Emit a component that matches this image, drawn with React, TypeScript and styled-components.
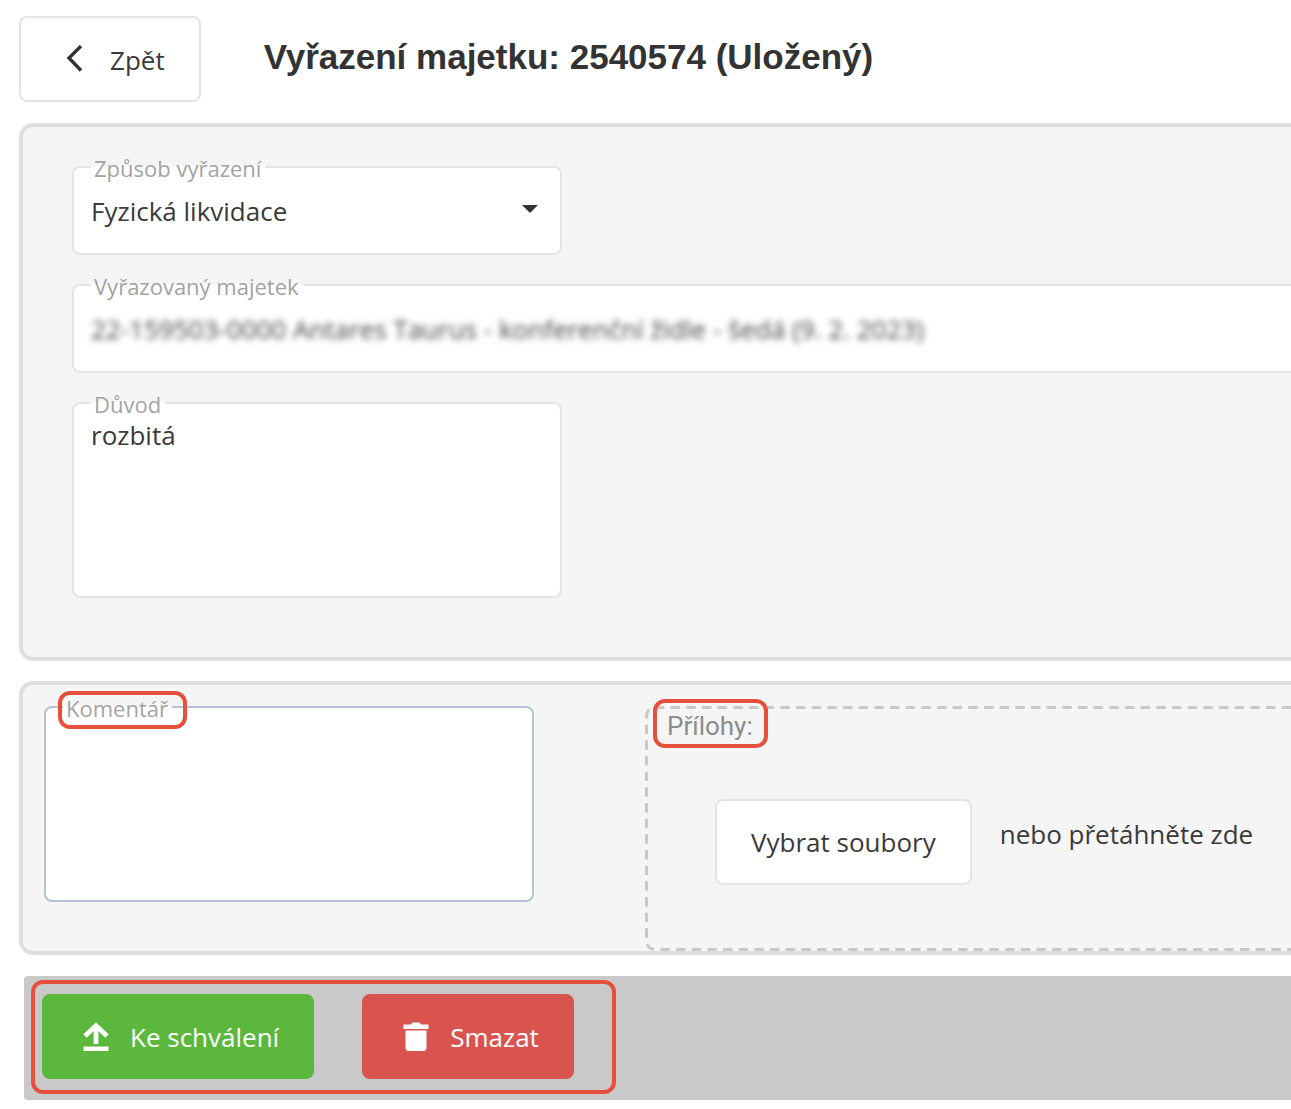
import React from 'react';
import styled, { createGlobalStyle, css } from 'styled-components';

const ui = '"Open Sans", "Noto Sans", sans-serif';

const GlobalStyle = createGlobalStyle`
  *, *::before, *::after { box-sizing: border-box; }
  body { margin: 0; background: #fff; color: #3a3a3a; font-family: ${ui}; font-size: 26px; }
  button, input, select, textarea { font: inherit; color: inherit; }
`;

const Page = styled.main`
  padding: 16px 0 9px 19px;
  overflow: hidden;
`;

const Header = styled.header`
  display: flex;
  align-items: center;
  gap: 63px;
  margin-bottom: 21px;
`;

const Title = styled.h1`
  margin: 0;
  padding-bottom: 4px;
  font: bold 35px/44px "Liberation Sans", Arial, sans-serif;
  color: #333;
`;

const Button = styled.button`
  display: inline-flex;
  align-items: center;
  justify-content: center;
  height: 86px;
  padding: 0 34px;
  border: 2px solid #e4e4e4;
  border-radius: 8px;
  background: #fff;
  white-space: nowrap;
  cursor: pointer;
`;

const BackButton = styled(Button)`
  gap: 26px;
  padding: 2px 34px 0 45px;
`;

const ActionButton = styled(Button)<{ $tone: string }>`
  gap: 20px;
  height: 85px;
  padding: 0 33px 0 38px;
  border-color: ${(p) => p.$tone};
  background: ${(p) => p.$tone};
  color: #fff;
`;

const Panel = styled.section`
  border: 4px solid #dedede;
  border-right: 0;
  border-radius: 14px 0 0 14px;
  background: #f5f5f5;
`;

const DetailPanel = styled(Panel)`
  display: flex;
  flex-direction: column;
  gap: 29px;
  padding: 39px 0 59px 49px;
`;

const CommentPanel = styled(Panel)`
  display: flex;
  align-items: flex-start;
  gap: 111px;
  margin-top: 20px;
  padding: 21px 0 0 21px;
`;

const Field = styled.div<{ $wide?: boolean; $active?: boolean; $tall?: boolean }>`
  position: relative;
  flex: none;
  width: ${(p) => (p.$wide ? 'auto' : '490px')};
  height: ${(p) => (p.$tall ? '196px' : '89px')};
  border: 2px solid ${(p) => (p.$active ? '#b3c3d6' : '#e4e4e4')};
  border-radius: 8px;
  background: #fff;
  ${(p) => p.$wide && css`
    border-right: 0;
    border-radius: 8px 0 0 8px;
  `}
`;

const Label = styled.label`
  position: absolute;
  top: -17px;
  left: 17px;
  padding: 0 4px 0 3px;
  background: linear-gradient(#fff, #fff) 0 15px / 100% 2px no-repeat;
  color: #a3a3a3;
  font-size: 22px;
  line-height: 34px;
  white-space: nowrap;
`;

const control = css`
  display: block;
  width: 100%;
  height: 100%;
  margin: 0;
  border: 0;
  outline: 0;
  background: transparent;
`;

const Select = styled.select`
  ${control}
  padding: 0 50px 0 17px;
  appearance: none;
`;

const Caret = styled.svg`
  position: absolute;
  top: 37px;
  right: 22px;
  pointer-events: none;
`;

const MaskedInput = styled.input`
  ${control}
  padding: 0 17px;
  color: #444;
  filter: blur(3px);
`;

const TextArea = styled.textarea`
  ${control}
  padding: 14px 17px;
  line-height: 34px;
  resize: none;
`;

const DropZone = styled.div`
  position: relative;
  flex: 1;
  height: 245px;
  padding: 1px 0 0 22px;
`;

const DropOutline = styled.svg`
  position: absolute;
  inset: 0;
  width: 100%;
  height: 100%;
  pointer-events: none;

  rect {
    width: 1998px;
    height: calc(100% - 3px);
    fill: none;
    stroke: #c8c8c8;
    stroke-width: 3px;
    stroke-dasharray: 0.6 0.4;
  }
`;

const DropTitle = styled.span`
  position: relative;
  display: inline-block;
  color: #8c8c8c;
  font: 26px/34px Roboto, sans-serif;
`;

const DropRow = styled.div`
  display: flex;
  align-items: flex-start;
  gap: 28px;
  padding: 56px 0 0 48px;
`;

const DropHint = styled.span`
  padding-top: 18px;
  line-height: 34px;
  white-space: nowrap;
`;

const ActionBar = styled.footer`
  display: flex;
  margin: 21px 0 0 5px;
  padding: 18px 18px 21px;
  border-radius: 4px 0 0 4px;
  background: #c9c9c9;
`;

const Actions = styled.div`
  position: relative;
  display: flex;
  gap: 48px;
`;

const Callout = styled.span<{ $inset: string }>`
  position: absolute;
  inset: ${(p) => p.$inset};
  border: 4px solid #e54f3b;
  border-radius: 12px;
  pointer-events: none;
`;

export default function App() {
  return (
    <>
      <GlobalStyle />
      <Page>
        <Header>
          <BackButton type="button">
            <svg width="18" height="30" viewBox="0 0 18 30" aria-hidden="true">
              <path d="M15 1 3 13l12 12.500" fill="none" stroke="#333" strokeWidth="3.4" />
            </svg>
            Zpět
          </BackButton>
          <Title>Vyřazení majetku: 2540574 (Uložený)</Title>
        </Header>

        <DetailPanel>
          <Field>
            <Label htmlFor="method">Způsob vyřazení</Label>
            <Select id="method" defaultValue="liquidation">
              <option value="liquidation">Fyzická likvidace</option>
            </Select>
            <Caret width="16" height="8" viewBox="0 0 16 8" aria-hidden="true">
              <path d="M0 0h16L8 8z" fill="#333" />
            </Caret>
          </Field>
          <Field $wide>
            <Label htmlFor="asset">Vyřazovaný majetek</Label>
            <MaskedInput
              id="asset"
              type="text"
              defaultValue="22-159503-0000 Antares Taurus - konferenční židle - šedá (9. 2. 2023)"
            />
          </Field>
          <Field $tall>
            <Label htmlFor="reason">Důvod</Label>
            <TextArea id="reason" defaultValue="rozbitá" />
          </Field>
        </DetailPanel>

        <CommentPanel>
          <Field $tall $active>
            <Label htmlFor="comment">
              Komentář
              <Callout $inset="0 -15px -4px -5px" />
            </Label>
            <TextArea id="comment" />
          </Field>
          <DropZone>
            <DropOutline aria-hidden="true">
              <rect x="1.5" y="1.5" rx="8.5" pathLength={285} />
            </DropOutline>
            <DropTitle>
              Přílohy:
              <Callout $inset="-10px -15px -5px -14px" />
            </DropTitle>
            <DropRow>
              <Button type="button">Vybrat soubory</Button>
              <DropHint>nebo přetáhněte zde</DropHint>
            </DropRow>
          </DropZone>
        </CommentPanel>

        <ActionBar>
          <Actions>
            <ActionButton type="button" $tone="#5cb83c">
              <svg width="28" height="30" viewBox="0 0 28 30" aria-hidden="true">
                <path d="M14 4v18M3 14 14 3.500l11 10.500" fill="none" stroke="#fff" strokeWidth="4.8" />
                <path d="M1.500 24.500h25v4.500h-25z" fill="#fff" />
              </svg>
              Ke schválení
            </ActionButton>
            <ActionButton type="button" $tone="#d9534f">
              <svg width="28" height="30" viewBox="0 0 28 30" aria-hidden="true">
                <path d="M1.500 2.500h7.500l1.500-2h7l1.500 2h7.500v4.500h-25zM3.500 8.500h21v17a3.500 3.500 0 0 1-3.500 3.500h-14a3.500 3.500 0 0 1-3.500-3.500z" fill="#fff" />
              </svg>
              Smazat
            </ActionButton>
            <Callout $inset="-14px -42px -15px -11px" />
          </Actions>
        </ActionBar>
      </Page>
    </>
  );
}
